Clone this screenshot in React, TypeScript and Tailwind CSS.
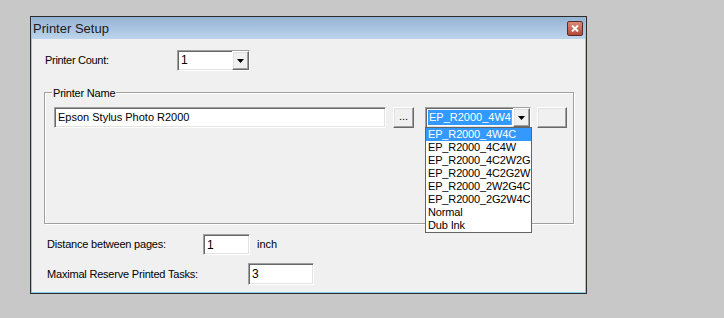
import React from "react";

const sunken =
  "border border-t-[#a0a0a0] border-l-[#a0a0a0] border-b-white border-r-white shadow-[inset_1px_1px_0_#696969,inset_-1px_-1px_0_#e3e3e3] bg-white";
const raised =
  "border border-t-white border-l-white border-b-[#696969] border-r-[#696969] shadow-[inset_-1px_-1px_0_#a0a0a0,inset_1px_1px_0_#e3e3e3] bg-[#f0f0f0]";

function Arrow() {
  return (
    <div className={`${raised} flex h-full w-[17px] shrink-0 items-center justify-center`}>
      <svg width="7" height="4" viewBox="0 0 7 4">
        <path d="M0 0h7L3.5 4z" fill="#000" />
      </svg>
    </div>
  );
}

const options = [
  "EP_R2000_4W4C",
  "EP_R2000_4C4W",
  "EP_R2000_4C2W2G",
  "EP_R2000_4C2G2W",
  "EP_R2000_2W2G4C",
  "EP_R2000_2G2W4C",
  "Normal",
  "Dub Ink",
];

export default function App() {
  return (
    <div className="h-[318px] w-[724px] bg-[#c8c8c8] pl-[30px] pt-[16px] font-['Liberation_Sans',Arial,sans-serif] text-[11px] text-black">
      <div className="flex h-[278px] w-[557px] flex-col border border-[#2d2d2d]">
        <div className="flex flex-1 flex-col border-x border-b border-[#86cdec]">
          {/* title bar */}
          <div className="flex h-[22px] items-center justify-between bg-gradient-to-b from-[#94b3d3] to-[#bdd5ec] pl-[1px] pr-[2px]">
            <span className="pt-[2px] text-[13px] text-[#1e1a1a]">Printer Setup</span>
            <div className="flex h-[15px] w-[16px] items-center justify-center rounded-[2px] border border-[#5b2b28] bg-gradient-to-b from-[#d88a78] to-[#b44a38]">
              <svg width="8" height="7" viewBox="0 0 8 7">
                <path d="M1 0.5l6 6M7 0.5l-6 6" stroke="#fff" strokeWidth="2" />
              </svg>
            </div>
          </div>

          {/* client */}
          <div className="flex flex-1 flex-col bg-[#f0f0f0]">
            <div className="mt-[11px] flex items-center">
              <span className="w-[145px] pl-[13px] tracking-[-0.3px]">Printer Count:</span>
              <div className={`${sunken} flex h-[21px] w-[73px] items-stretch`}>
                <span className="flex-1 pl-[3px] pt-[3px] text-[12px] leading-none">1</span>
                <Arrow />
              </div>
            </div>

            <div className="relative ml-[12px] mt-[21px] h-[132px] w-[530px] border border-[#a0a0a0] shadow-[inset_1px_1px_0_#fff,1px_1px_0_#fff]">
              <span className="absolute -top-[8px] left-[7px] bg-[#f0f0f0] px-[1px] tracking-[-0.2px]">
                Printer Name
              </span>
              <div className="flex pl-[9px] pt-[14px]">
                <div className={`${sunken} flex h-[21px] w-[332px] items-center pl-[3px]`}>
                  Epson Stylus Photo R2000
                </div>
                <div className={`${raised} ml-[7px] flex h-[21px] w-[21px] items-center justify-center pb-[2px]`}>
                  ...
                </div>
                <div className="relative ml-[11px] w-[106px]">
                  <div className={`${sunken} flex h-[21px] items-stretch`}>
                    <div className="flex flex-1 items-center overflow-hidden pl-[2px] pr-[1px]">
                      <span className="overflow-hidden whitespace-nowrap bg-[#3399ff] pl-[1px] leading-[15px] text-white">
                        EP_R2000_4W4C
                      </span>
                      <span className="h-[15px] w-[1px] shrink-0 bg-[#ff8a00]" />
                    </div>
                    <Arrow />
                  </div>
                  <div className="absolute left-0 top-[20px] z-10 w-[107px] border border-[#646464] bg-white">
                    {options.map((o, i) => (
                      <div
                        key={o}
                        className={`h-[13px] whitespace-nowrap pl-[2px] leading-[13px] tracking-[-0.15px] ${i === 0 ? "bg-[#3399ff] text-white" : ""}`}
                      >
                        {o}
                      </div>
                    ))}
                  </div>
                </div>
                <div className={`${raised} ml-[6px] h-[21px] w-[30px]`} />
              </div>
            </div>

            <div className="mt-[10px] flex items-center">
              <span className="w-[171px] pl-[15px] tracking-[-0.2px]">Distance between pages:</span>
              <div className={`${sunken} flex h-[21px] w-[47px] items-center pl-[3px] text-[12px]`}>1</div>
              <span className="ml-[7px]">inch</span>
            </div>

            <div className="mt-[8px] flex items-center">
              <span className="w-[216px] pl-[15px] tracking-[-0.2px]">Maximal Reserve Printed Tasks:</span>
              <div className={`${sunken} flex h-[22px] w-[66px] items-center pl-[3px] text-[12px]`}>3</div>
            </div>
          </div>
        </div>
      </div>
    </div>
  );
}
